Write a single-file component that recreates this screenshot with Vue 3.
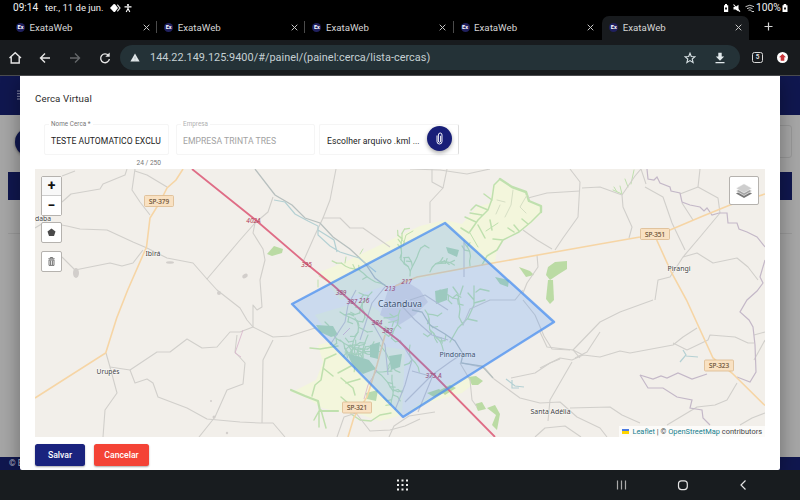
<script setup>
const tabs = [{ id: 1 }, { id: 2 }, { id: 3 }, { id: 4 }, { id: 5, active: true }]

const roads = [
  '62,202 71,194 100,189 103,184 125,175 127,169',
  '62,176 75,171',
  '135,169 132,190 140,202 150,215',
  '135,171 147,175 167,187',
  '35,228 45,222 67,226 80,229 107,230 133,242 147,248 167,258 193,263 207,279 240,240 255,223',
  '207,279 217,290 240,308 247,320 253,327 273,337 290,336 315,328',
  '62,257 75,270 110,263 122,266 133,263 143,250',
  '336,169 330,200 323,218 340,218 350,228 363,228 390,247',
  '323,218 315,235 303,262',
  '273,197 268,212 255,223 253,233 263,249 265,260 260,280 262,307 257,310 253,305 253,327 240,332 230,332 217,347 202,348 187,339 170,352 157,352 130,370 110,367 106,353',
  '410,169 440,170 467,174 490,169',
  '432,169 432,182 443,188 430,202 430,223',
  '447,169 443,188',
  '570,169 580,182 578,217 563,238 555,250',
  '582,188 600,187 622,195 623,207 632,227 629,238',
  '622,195 635,176 641,169 646,184',
  '523,230 537,240 552,249',
  '528,198 547,193 580,191',
  '537,255 538,267 527,283 523,293',
  '540,368 560,358 572,360 583,355 600,357 620,351 630,353 673,345 683,337 697,328',
  '583,355 573,350 600,322 620,312 653,300',
  '540,332 547,347 573,350 580,358',
  '572,362 550,400 548,421',
  '570,408 610,407 622,415 640,423',
  '737,383 727,400 715,405 697,407 667,425',
  '673,343 687,350 708,340 710,335 735,337 748,343 754,343',
  '645,187 663,197 672,223 685,250',
  '720,213 700,237 683,257 670,277 658,280 655,300',
  '700,169 698,187 718,198 720,213',
  '698,187 680,194',
  '682,203 693,220',
  '683,257 697,253 713,263 737,258 748,267 758,280',
  '130,370 135,383 147,379 153,383 158,397 187,408 207,419 240,422 260,423 273,423 285,437',
  '110,367 117,393 105,410 103,437',
  '199,437 215,417 227,390 243,384 245,363 235,352 237,335',
  '262,423 263,360 273,340',
  '337,437 344,417 356,413 370,431 390,430 405,426 420,419',
  '389,437 394,426 409,416 435,412',
  '463,325 470,309 490,300 515,300 523,290',
  '523,300 535,315 544,336 552,349 570,350',
  '462,363 485,368 494,379 520,398 540,403 560,402 577,417 600,428 607,437',
  '460,363 470,380 472,400 477,407',
  '511,378 535,373 550,363 560,359',
  '575,358 587,352 600,332',
  '535,437 545,428 565,426 581,437',
  '754,335 765,332', '754,360 765,340',
  '740,425 752,418 765,413'
]

const boundaries = [
  '647,169 648,179 654,180 657,177 660,183 670,187 671,191 680,193 682,202 690,205 700,207 704,211 707,208 712,215 719,213 727,213 728,223 737,223 739,229 747,232 757,237 765,247',
  '765,260 760,277 763,283 757,291 747,300 740,312 749,320 753,327 755,345 756,372 750,382 737,377',
  '640,375 653,379 661,376 667,378 678,373 692,379 707,374',
  '640,375 648,388 663,388 677,397 692,400 690,408 702,410 703,418 710,425'
]

// Small seeded generator: the vegetation along streams branches the same way on each load.
let seed = 11
const rnd = () => {
  seed = (seed * 16807) % 2147483647
  return seed / 2147483647
}
function branch(x, y, angle, steps, depth, out) {
  let d = `M${x} ${y}`
  for (let i = 0; i < steps; i++) {
    angle += (rnd() - 0.5) * 0.9
    x += Math.cos(angle) * 5
    y += Math.sin(angle) * 5
    d += `L${x.toFixed(1)} ${y.toFixed(1)}`
    if (depth > 0 && rnd() > 0.45) {
      branch(x, y, angle + (rnd() > 0.5 ? 0.9 : -0.9), Math.max(1, steps - i - 3), depth - 1, out)
    }
  }
  out.push(d)
}
const streams = []
;[
  [385, 285, -2.3, 6], [372, 292, 2.6, 5], [410, 276, -1.3, 6], [430, 272, -1.2, 6],
  [400, 258, -0.8, 5], [470, 266, -1.7, 5], [360, 270, -2.8, 4], [440, 290, 0.3, 4],
  [425, 310, 0.6, 5], [340, 312, 0.7, 5], [325, 322, 0.9, 5], [355, 318, 1.4, 6], [368, 335, 1.7, 7],
  [380, 345, 1.3, 7], [340, 340, 0.3, 6], [345, 352, 0.6, 6], [392, 375, 1.9, 6], [410, 345, 1.9, 6],
  [370, 365, 0.7, 7], [350, 345, 0.5, 6], [430, 330, 0.6, 5], [400, 310, 1.8, 6]
].forEach(([x, y, a, n]) => branch(x, y, a, n, 2, streams))

const cities = [
  { t: 'daba', x: 35, y: 221, w: 16, s: 6.5 },
  { t: 'Ibirá', x: 145.5, y: 256, w: 15, s: 7 },
  { t: 'Urupês', x: 96.5, y: 374, w: 23, s: 7 },
  { t: 'Pirangi', x: 667.5, y: 271, w: 23, s: 7 },
  { t: 'Pindorama', x: 439.5, y: 357, w: 36, s: 7 },
  { t: 'Santa Adélia', x: 530.5, y: 413.5, w: 40, s: 7 },
  { t: 'Catanduva', x: 378, y: 307, w: 44, s: 9 }
]
const shields = [
  { t: 'SP-379', x: 144.5, y: 195.5 },
  { t: 'SP-351', x: 640.5, y: 228.5 },
  { t: 'SP-323', x: 704.5, y: 360 },
  { t: 'SP-321', x: 342.5, y: 402 }
]
const exits = [
  { t: '402A', x: 253.5, y: 222.5 }, { t: '395', x: 306.5, y: 266.5 }, { t: '389', x: 341, y: 294.5 },
  { t: '387', x: 352, y: 303.5 }, { t: '216', x: 364, y: 303 }, { t: '213', x: 390, y: 290.5 },
  { t: '217', x: 406.5, y: 283.5 }, { t: '384', x: 377, y: 325 }, { t: '383', x: 387.5, y: 333 },
  { t: '375 A', x: 433.5, y: 377.5 }
]
</script>

<template>
  <div class="screen">
    <div class="status">
      <span class="clock">09:14</span>
      <span class="date">ter., 11 de jun.</span>
      <svg class="st-ico" width="22" height="10" viewBox="0 0 22 10">
        <path d="M0 5 3.500 1.200Q4.500.6 5.300 1.500L8 5 5.300 8.500Q4.500 9.400 3.500 8.800Z" fill="#fff" />
        <path d="M7.300 1.700 10 5 7.300 8.300" fill="none" stroke="#ddd" stroke-width="1.200" />
        <circle cx="18" cy="2" r="1.100" fill="#fff" />
        <path d="M14.500 3.900H21.500M18 3.500V6M18 5.500 16.200 9M18 5.500 19.800 9" fill="none" stroke="#fff" stroke-width="1.100" />
      </svg>
      <svg class="st-right" width="33" height="10" viewBox="0 0 33 10">
        <path d="M1 2.200H2V1H4V2.200H5.200V9H1Z" fill="#fff" /><path d="M3 4V7M2 5.500H4" stroke="#111" stroke-width=".9" />
        <path d="M10.500 4H12.500L15.500 1.800V8.500L12.500 6.500H10.500Z" fill="#fff" /><path d="M10.500 1.500 17 8.700" stroke="#fff" stroke-width="1.100" />
        <path d="M22.500 3.700Q27 .7 31 3.700M24 5.600Q27 3.800 29.500 5.600M25.500 7.300Q27 6.300 28.500 7.600M28.500 8.500H31" fill="none" stroke="#c8c8c8" stroke-width="1" />
      </svg>
      <span class="pct">100%</span>
      <svg class="batt" width="6" height="10" viewBox="0 0 6 10"><path d="M.5 2.200H1.700V1H4.200V2.200H5.500V9H.5Z" fill="#fff" /><path d="M3 4V7M2 5.500H4" stroke="#111" stroke-width=".9" /></svg>
    </div>

    <div class="tabs">
      <div v-for="tab in tabs" :key="tab.id" class="tab" :class="{ active: tab.active }">
        <span class="fav">Ex</span>
        <span class="tab-name">ExataWeb</span>
        <svg class="close" width="7" height="7" viewBox="0 0 7 7"><path d="M.7.7 6.300 6.300M6.300.7.7 6.300" stroke="#c6c6c6" stroke-width="1" /></svg>
      </div>
      <svg class="plus" width="9" height="9" viewBox="0 0 9 9"><path d="M4.500.5V8.500M.5 4.500H8.500" stroke="#d5d5d5" stroke-width="1.200" /></svg>
    </div>

    <div class="toolbar">
      <svg class="navs" width="120" height="24" viewBox="0 0 120 24" fill="none" stroke="#e6e6e6" stroke-width="1.400">
        <path d="M9.500 12 15.200 6.700 21 12M11.200 11V17H19.200V11" />
        <path d="M50 12H41M45 7.500 40.500 12 45 16.500" />
        <path d="M70 12H79M75 7.500 79.500 12 75 16.500" stroke="#64676a" />
        <path d="M108.500 9.500A4.400 4.400 0 1 0 109.400 13" /><path d="M109.700 6.500V10.700H105.300Z" fill="#e6e6e6" stroke="none" />
      </svg>
      <div class="omnibox">
        <svg width="10" height="9" viewBox="0 0 10 9"><path d="M5 .5 9.600 8.500H.4Z" fill="#e1e7e9" /><path d="M5 3.800V6.200M5 6.800V7.600" stroke="#9fabb0" stroke-width=".7" /></svg>
        <span class="url">144.22.149.125:9400/#/painel/(painel:cerca/lista-cercas)</span>
        <svg class="star" width="12" height="12" viewBox="0 0 12 12"><path d="M6 1.200 7.300 4.500 11 4.700 8.200 7 9.100 10.600 6 8.600 2.900 10.600 3.800 7 1 4.700 4.700 4.500Z" fill="none" stroke="#dbe4e7" stroke-width="1.100" /></svg>
        <svg width="10" height="12" viewBox="0 0 10 12"><path d="M3.300.8H6.700V4.500H9.200L5 8.800.8 4.500H3.300ZM.5 9.900H9.500V11.200H.5Z" fill="#e1e9ec" /></svg>
      </div>
      <span class="count">5</span>
      <span class="profile"><svg width="7" height="7" viewBox="0 0 7 7"><path d="M3.500 0 7 3.300H5.300V6.700H1.700V3.300H0Z" fill="#c93439" /></svg></span>
    </div>

    <div class="page">
      <div class="app-head"><svg width="6" height="10" viewBox="0 0 6 10"><path d="M0 1H6M0 3.700H6M0 6.300H6M0 9H6" stroke="#8f93b0" stroke-width="1" /></svg></div>
      <div class="app-body">
        <div class="app-filter"><span class="disc"></span><span class="search"></span></div>
        <div class="app-bar"></div>
        <div class="app-row"></div>
      </div>
      <div class="app-foot">© Exata</div>

      <section class="dialog">
        <h1>Cerca Virtual</h1>
        <div class="form">
          <div class="field f-name">
            <label>Nome Cerca *</label><span>TESTE AUTOMATICO EXCLU</span>
          </div>
          <div class="field f-comp">
            <label>Empresa</label><span>EMPRESA TRINTA TRES</span>
          </div>
          <div class="field f-file">
            <span>Escolher arquivo .kml ...</span>
            <button class="clip"><svg width="7" height="13" viewBox="0 0 7 13"><path d="M1 3.500V9.500Q1 12 3.500 12T6 9.500V3Q6 1 4.200 1T2.400 3V9Q2.400 10.300 3.500 10.300T4.600 9V3.800" fill="none" stroke="#fff" stroke-width=".95" /></svg></button>
          </div>
        </div>
        <div class="hint">24 / 250</div>

        <div class="map">
          <svg class="tiles" width="730" height="268" viewBox="35 169 730 268">
            <rect x="35" y="169" width="730" height="268" fill="#f2efea" />
            <g fill="#f3f6dc">
              <path d="M500 179 512 187 527 192 528 202 542 205 541 214 527 227 503 240 497 250 495 262 470 268 385 286 340 300 325 280 320 272 345 262 380 245 420 226 445 220 462 224 477 207 490 203 493 185Z" />
              <path d="M318 345 345 338 375 345 405 350 402 415 380 421 362 415 340 412 322 408 309 399 292 392 302 387 316 380 323 362Z" />
              <path d="M315 315 365 300 390 320 380 360 340 350Z" />
            </g>
            <path d="M388 290 404 280 420 290 428 302 415 315 399 325 380 315Z" fill="#dedadf" />
            <path d="M402 416 445 385 458 381 474 376 476 382 462 393 430 402Z" fill="#f3f6dc" />
            <g fill="none" stroke="#bfe0ae" stroke-linecap="round" stroke-linejoin="round">
              <path stroke-width="2.400" d="M500 179 512 187 526 192 529 201 541 206 541 212" />
              <path stroke-width="1.500" d="M500 179 494 185 492 199 488 210 478 220 469 233 461 228M541 212 531 222 519 232 503 240 497 250 487 256 482 265M488 210 476 205 471 210M482 215 470 213M476 222 465 217M492 200 484 194M490 220 492 230M478 225 485 238M503 240 493 239M514 232 508 228M519 231 514 225M528 224 522 219" />
              <path stroke-width="1" d="M513 190 511 205 505 217M527 195 520 207 526 213M497 200 505 202M500 205 496 214" stroke="#d6dfc4" />
              <path stroke-width="1" d="M622 194 620 186M622 194 613 190M628 187 625 179M631 184 634 170M617 192 614 187M498 223 486 231M478 247 470 233M403 246 406 235 413 231M405 243 398 235M345 263 346 257M360 254 363 249M327 281 319 276M318 287 318 280" />
              <path stroke-width="2.200" d="M291 390 305 396 318 401 320 411 338 411" />
              <path stroke-width="1.500" d="M310 348 320 349 338 346M336 354 325 359 323 369M323 368 333 376M323 369 321 380 315 385 312 396M319 411 319 427M321 410 326 428M319 411 314 420M338 373 351 366M341 378 353 388 355 395M341 397 348 403M346 383 360 379M351 414 360 420 371 421 380 415 391 413" />
              <path v-for="(d, i) in streams" :key="'s' + i" :d="d" stroke-width="1.200" />
              <path stroke-width="1.300" d="M453 287 458 294 460 309 459 317 463 325M463 286 460 295M474 286 474 305 468 318 458 328 450 342M474 300 468 293M474 303 485 300M476 292 480 289 489 291M468 319 477 321" />
            </g>
            <g fill="#bbdba4">
              <path d="M548 267 555 262 567 261 567 269 559 274 550 280 546 275Z" /><path d="M548 280 553 280 554 300 550 304 546 299Z" />
              <path d="M519 267 530 271 534 275 526 277Z" /><path d="M267 254 274 246 283 249 282 253 272 256Z" />
              <path d="M468 377 476 376 483 381 478 385 472 385Z" /><path d="M475 404 482 402 486 409 478 411ZM487 408 495 405 500 414 497 430 492 425 496 415Z" />
              <path d="M316 325 333 326 338 335 331 337 320 332ZM435 291 448 288 447 300 436 304ZM446 247 459 250 457 257 448 253ZM347 353 369 360 376 369 363 374 353 366ZM366 393 378 390 376 401 367 399ZM495 277 509 280 508 287 500 284ZM370 345 380 342 378 359 370 357ZM389 356 402 354 400 367 391 370Z" fill="#b7dab0" />
              <path d="M427 393 439 389 444 393 434 397ZM440 390 450 385 456 388 445 395Z" />
            </g>
            <g fill="#d2cecb"><ellipse cx="76" cy="273" rx="3" ry="5" /><ellipse cx="170" cy="262.500" rx="4" ry="1.200" /><ellipse cx="245" cy="276" rx="3" ry="2" transform="rotate(-30 245 276)" /><circle cx="219" cy="293" r="2" /><circle cx="227" cy="433" r="1.200" /><circle cx="211" cy="401" r="1" /><circle cx="214" cy="417" r="1.500" /></g>
            <g fill="none" stroke="#d1cfcb" stroke-width="1.100" stroke-linejoin="round">
              <polyline v-for="(p, i) in roads" :key="'r' + i" :points="p" />
              <path d="M385 287 372 303 365 325 360 340M400 304 415 320 432 335 448 340M410 300 425 295 448 310M400 340 412 360 405 385 395 410M372 322 385 345 388 375M432 375 405 402M433 375 418 412M432 375 450 362 462 354M356 290 348 305 345 322 330 345M464 277 464 240M430 376 412 371" stroke="#c9c7cb" />
            </g>
            <path d="M255 169 275 195 292 205 305 218 320 223 333 237 350 249 365 263 375 278 387 287M412 310 422 312 430 325 445 334 455 341 463 354 461 363 482 366 493 378" fill="none" stroke="#b8c0bf" stroke-width="1.300" />
            <path d="M274 200 285 202 295 214 308 221 318 226 318 235 330 246 340 252 359 258 376 272M318 230 334 240 337 252M506 379 515 386 524 387M512 380 512 388 519 388M683 350 686 355 680 362M686 356 698 357" fill="none" stroke="#b4d0d3" stroke-width="1.200" />
            <g fill="none" stroke="#c4b8c8" stroke-width="1.200"><polyline v-for="(p, i) in boundaries" :key="'b' + i" :points="p" /></g>
            <g fill="none" stroke="#d9b8cd" stroke-width=".9"><path d="M243 330 235 353 241 357M364 399 368 385 377 370M350 328 343 335" /></g>
            <g fill="none" stroke="#f6d5a5" stroke-width="1.600">
              <path d="M183 169 176 180 167 188 160 202 150 218 146.500 247 127.700 290 116.700 318 105.700 353 35 398" />
              <path d="M395 286 417 277 493 263 600 244 640 237 670 230 703 216 730 205 765 194" />
              <path d="M656.700 240 671.700 273 686.500 300 713 358 732 373 765 405.500" />
              <path d="M348 437 354 417 367 397 377 365 385 335" />
            </g>
            <path d="M192 169 255 219.500 305 262.500 334 286 372 320 398 340 435 376 495 437" fill="none" stroke="#df6d86" stroke-width="1.800" />
            <g class="exit"><text v-for="e in exits" :key="e.t" :x="e.x" :y="e.y">{{ e.t }}</text></g>
            <g v-for="s in shields" :key="s.t" class="shield">
              <rect :x="s.x" :y="s.y" width="29" height="11" rx="1" /><text :x="s.x + 14.5" :y="s.y + 8" textLength="20">{{ s.t }}</text>
            </g>
            <g class="city"><text v-for="c in cities" :key="c.t" :x="c.x" :y="c.y" :font-size="c.s" :textLength="c.w" lengthAdjust="spacingAndGlyphs">{{ c.t }}</text></g>
            <path d="M292 304 445 223 554 322 403 417Z" fill="#3388ff" fill-opacity=".2" stroke="#4a8ff0" stroke-opacity=".75" stroke-width="2.400" stroke-linejoin="round" />
          </svg>
          <div class="ctl zoom-ctl"><button>+</button><button>−</button></div>
          <div class="ctl draw-ctl"><svg width="9" height="9" viewBox="0 0 9 9"><path d="M4.500.5 8.500 3.500 7 8H2L.5 3.500Z" fill="#4a4a4a" /></svg></div>
          <div class="ctl trash-ctl"><svg width="7" height="9" viewBox="0 0 7 9"><path d="M.3 1.800H6.700M2.300 1.500V.5H4.700V1.500M1 3V8.400H6V3ZM2.600 3.500V8M4.400 3.500V8" fill="none" stroke="#666" stroke-width=".9" /></svg></div>
          <div class="ctl layers-ctl"><svg width="18" height="16" viewBox="0 0 18 16"><path d="M1 10.500 9 15 17 10.500 9 6Z" fill="#777" /><path d="M1 8 9 12.500 17 8 9 3.500Z" fill="#a2a2a2" stroke="#fff" stroke-width=".6" /><path d="M1 5.300 9 10 17 5.300 9 .8Z" fill="#cecece" stroke="#fff" stroke-width=".5" /></svg></div>
          <div class="credit"><i class="flag"></i><a>Leaflet</a> | © <a>OpenStreetMap</a> contributors</div>
        </div>

        <div class="actions"><button class="save">Salvar</button><button class="cancel">Cancelar</button></div>
      </section>
    </div>

    <div class="sysnav">
      <svg width="800" height="30" viewBox="0 0 800 30" fill="none" stroke="#e4e4e4" stroke-width="1.200">
        <path d="M397 10.500H408M397 15H408M397 19.500H408" stroke="#f0f0f0" stroke-width="2" stroke-dasharray="2 2.500" />
        <path d="M617.500 10.500V19.500M621.500 10.500V19.500M625.500 10.500V19.500" stroke="#aaa" />
        <rect x="678.500" y="10.800" width="8.800" height="8.800" rx="3" />
        <path d="M745.500 10.500 741 15 745.500 19.500" />
      </svg>
    </div>
  </div>
</template>

<style>
body { background: #000; overflow: hidden; }
</style>

<style scoped>
* { box-sizing: border-box; }
.screen { width: 800px; height: 500px; display: flex; flex-direction: column; overflow: hidden; background: #000; font-family: Roboto, "Liberation Sans", sans-serif; }
button { border: 0; padding: 0; margin: 0; font: inherit; display: flex; align-items: center; justify-content: center; }
svg { display: block; flex: none; }
.status { height: 16px; display: flex; align-items: center; padding: 0 12px 1px 13px; color: #f1f1f1; font-size: 10.100px; line-height: 15px; white-space: nowrap; }
.clock { width: 32px; }
.date { width: 65px; font-size: 9.500px; }
.st-right { margin-left: auto; }
.pct { font-size: 10.300px; width: 26px; }
.tabs { height: 24px; display: flex; }
.tab { width: 148.200px; display: flex; align-items: center; padding: 0 7px 2px 16px; color: #d5d5d5; position: relative; }
.tab:not(.active):not(:nth-child(4))::after { content: ""; position: absolute; right: -9px; top: 5px; width: 1px; height: 12px; background: #4b4b4b; }
.tab.active { margin-left: 9px; padding-left: 7.500px; padding-right: 6.500px; width: 147px; background: #181b1e; border-radius: 7px 7px 0 0; }
.fav { width: 9px; height: 9px; border-radius: 50%; background: #20205f; color: #fff; font-size: 5.500px; font-weight: 700; line-height: 9px; text-align: center; margin-right: 4.500px; }
.tab-name { font-size: 9.700px; }
.close { margin-left: auto; margin-right: -8.500px; }
.tab.active .close { margin-right: 0; }
.plus { margin: 6px 0 0 15px; }
.toolbar { height: 36px; background: #181b1e; border-bottom: 1px solid #4a4b4e; display: flex; align-items: center; }
.omnibox { width: 620px; height: 25px; border-radius: 13px; background: #243237; display: flex; align-items: center; padding: 0 15px 0 10px; }
.url { margin-left: 10px; color: #c5d0d3; font-size: 10.900px; letter-spacing: .03px; white-space: nowrap; }
.star { margin-left: auto; margin-right: 19px; }
.count { margin-left: 12px; width: 11px; height: 11px; border: 1.300px solid #dadada; border-radius: 2.500px; color: #ddd; font-size: 6.500px; font-weight: 700; line-height: 8.500px; text-align: center; }
.profile { margin-left: 14px; width: 11px; height: 11px; border-radius: 50%; background: #fff; display: flex; align-items: center; justify-content: center; }

.page { height: 394px; position: relative; overflow: hidden; display: flex; flex-direction: column; background: #a6a6a6; }
.app-head { height: 39px; background: #10174f; padding: 14px 0 0 17px; flex: none; }
.app-body { flex: 1; padding: 0 8px; }
.app-filter { height: 57px; display: flex; justify-content: space-between; padding: 10px 0 14px 7px; }
.disc { width: 28px; height: 28px; margin-top: 3px; border-radius: 50%; background: #10174f; box-shadow: 0 1px 3px #0006; }
.search { width: 150px; border: 1px solid #979797; border-radius: 3px; }
.app-bar { height: 28px; background: #10174f; }
.app-row { height: 34px; border-bottom: 1px solid #999; }
.app-foot { height: 13px; background: #10174f; color: #b8bac9; font-size: 8.500px; line-height: 13px; padding-left: 9px; }

.dialog { position: absolute; left: 20px; top: 0; width: 760px; height: 394px; background: #fff; border-radius: 0 0 2px 2px; padding: 16px 15px 0; box-shadow: 0 6px 18px 2px #0000004d; }
h1 { margin: 0; height: 14px; line-height: 14px; font-size: 9.700px; font-weight: 400; color: #2c2c2c; letter-spacing: .1px; }
.form { display: flex; margin-top: 18px; padding-left: 9px; height: 31px; }
.field { border: 1px solid #f5f5f5; border-radius: 2px; position: relative; font-size: 8.600px; letter-spacing: .05px; display: flex; align-items: center; white-space: nowrap; color: #222; padding: 2px 0 0 6px; }
.field label { position: absolute; left: 4px; top: -5px; padding: 0 2px; background: #fff; font-size: 6.300px; line-height: 8px; color: #777; }
.f-name { width: 125px; }
.f-comp { width: 139px; margin-left: 7px; color: #a2a2a2; }
.f-comp label { color: #b0b0b0; }
.f-file { width: 140px; margin-left: 4px; padding-left: 7px; border-right-color: #ddd; letter-spacing: .08px; }
.clip { width: 25px; height: 25px; border-radius: 50%; background: #181f78; box-shadow: 0 2px 4px #0005; margin: -5px 6px 0 auto; }
.hint { height: 14px; padding-top: 2px; margin-left: 101.500px; font-size: 6.600px; line-height: 12px; color: #777; }
.map { width: 730px; height: 268px; position: relative; overflow: hidden; }
.exit { font: italic 6.500px "Noto Sans", sans-serif; fill: #b13c58; text-anchor: middle; }
.shield rect { fill: #f9e1c2; stroke: #dcb98e; stroke-width: .8; }
.shield text { font: 6.300px "Noto Sans", sans-serif; fill: #6b5137; stroke: #6b5137; stroke-width: .15; text-anchor: middle; }
.city { font-family: "Noto Sans", sans-serif; fill: #444; stroke: #ffffffa0; stroke-width: 1.200; paint-order: stroke; }
.ctl { position: absolute; background: #fff; border: 1px solid #b5b2ae; border-radius: 2px; display: flex; align-items: center; justify-content: center; }
.zoom-ctl { left: 6px; top: 7px; width: 21px; height: 40px; flex-direction: column; }
.zoom-ctl button { width: 19px; height: 19px; background: #fff; font-weight: 700; font-size: 14px; line-height: 16px; padding-bottom: 2px; color: #111; }
.zoom-ctl button:first-child { border-bottom: 1px solid #ccc; background: #f8f8f8; }
.draw-ctl { left: 6px; top: 53px; width: 21px; height: 21px; }
.trash-ctl { left: 6px; top: 82px; width: 21px; height: 21px; }
.layers-ctl { left: 694px; top: 7px; width: 30px; height: 29px; }
.credit { position: absolute; right: 0; bottom: 0; height: 11px; padding: 0 3px; background: #ffffffb8; font-size: 7.450px; line-height: 11px; color: #444; white-space: nowrap; }
.credit a { color: #16808f; }
.flag { display: inline-block; width: 7px; height: 5px; margin-right: 3px; background: linear-gradient(#4c7be1 50%, #ffd500 50%); }
.actions { display: flex; gap: 9px; margin-top: 7px; color: #fff; font-size: 8.700px; font-weight: 500; }
.actions button { height: 22px; border-radius: 2.500px; color: #fff; box-shadow: 0 1px 2px #0005; }
.save { width: 50px; background: #1a237e; }
.cancel { width: 55px; background: #f44336; }
.sysnav { height: 30px; background: #181c1f; }
</style>
